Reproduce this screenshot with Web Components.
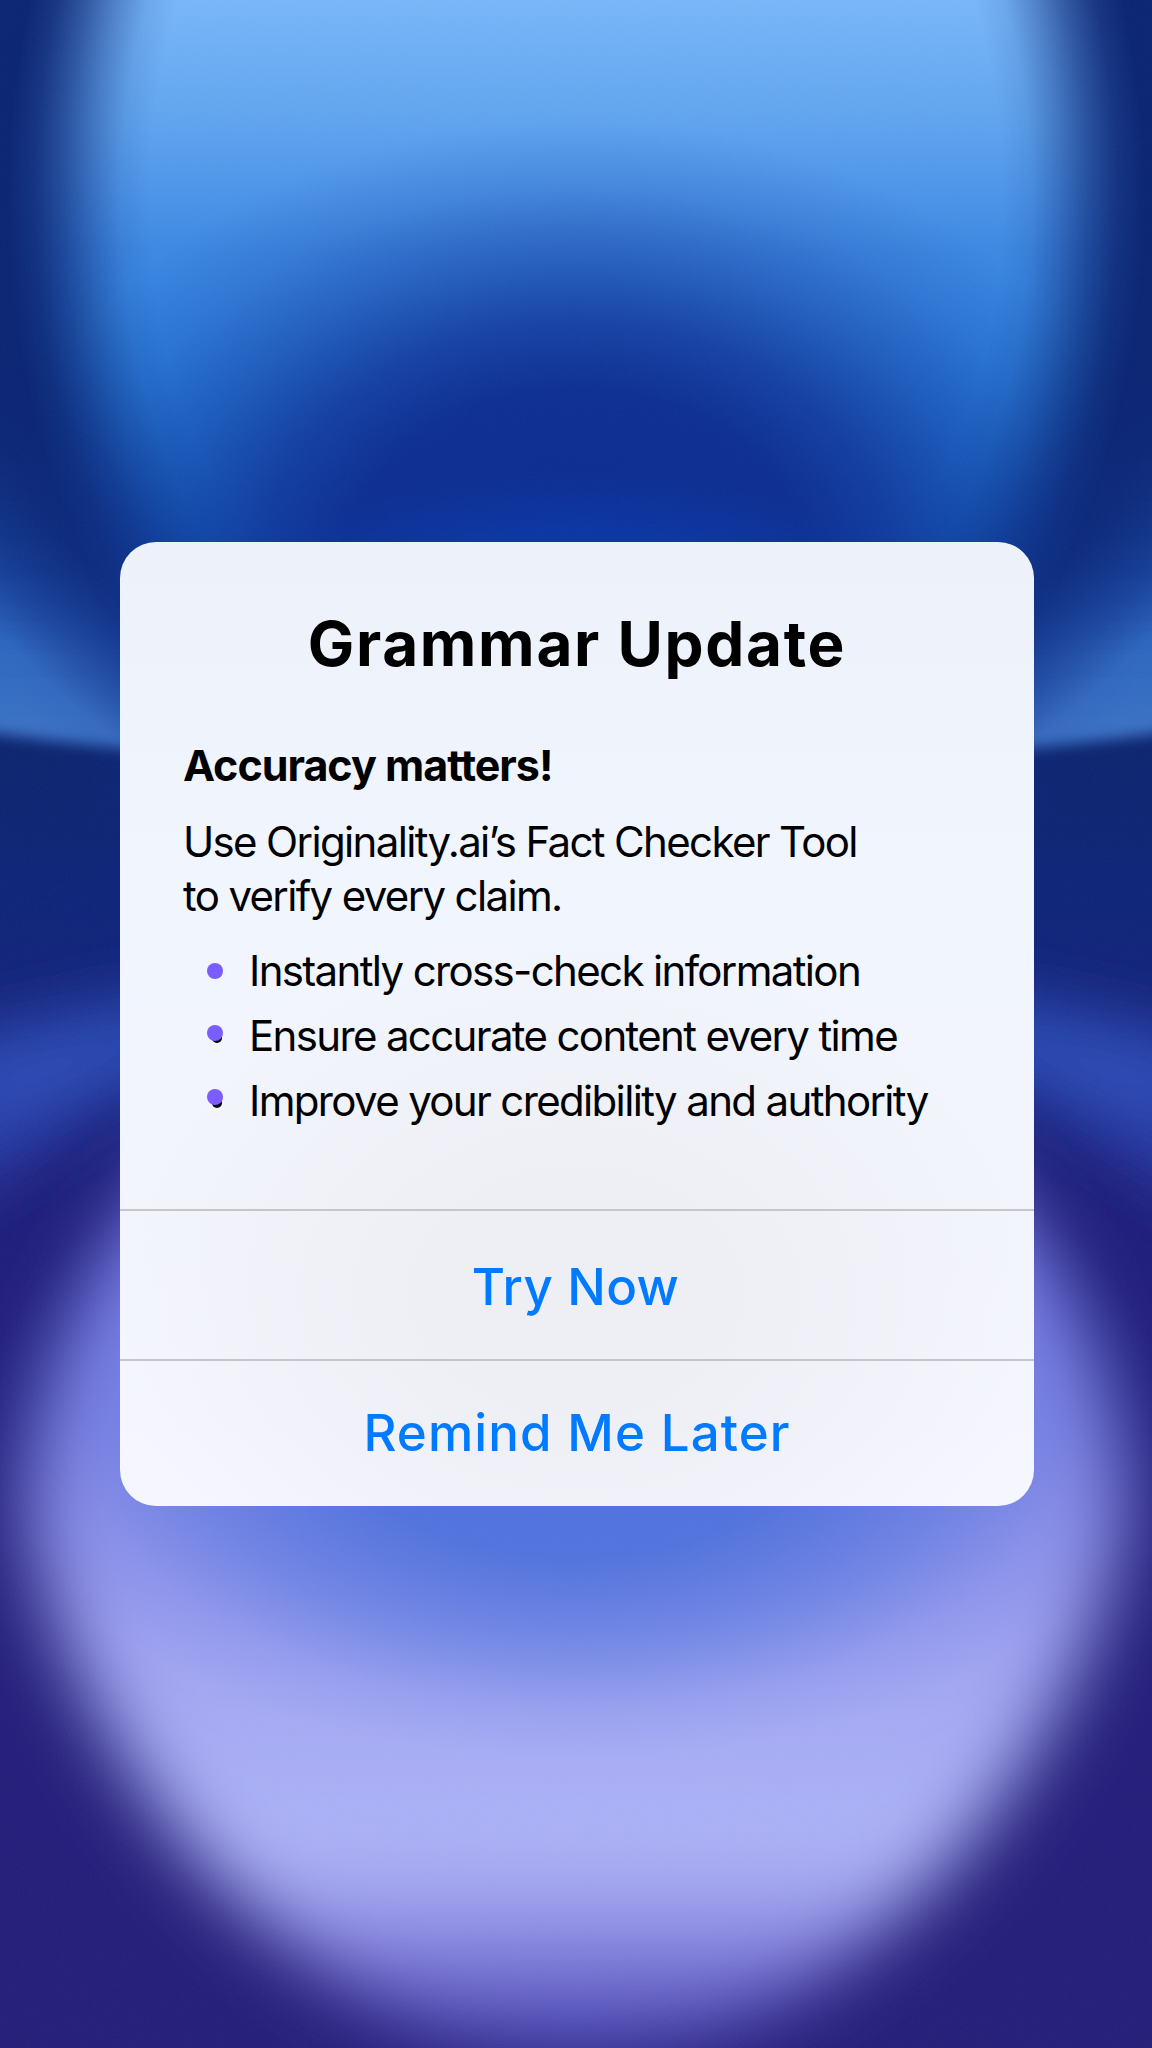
<!DOCTYPE html>
<html lang="en"><head><meta charset="utf-8"><title>Grammar Update</title>
<style>html,body{margin:0;padding:0;background:#0d2468}</style></head>
<body>
<update-screen>
  <alert-card>
    <span slot="title">Grammar Update</span>
    <alert-body slot="body">
      <span slot="lead">Accuracy matters!</span>
      <span slot="text">Use Originality.ai’s Fact Checker Tool<br>to verify every claim.</span>
      <bullet-item>Instantly cross-check information</bullet-item>
      <bullet-item style="--shift:-3px">Ensure accurate content every time</bullet-item>
      <bullet-item style="--shift:-4px">Improve your credibility and authority</bullet-item>
    </alert-body>
    <alert-action slot="actions" style="--h:150px;--pt:4px;--ls:.4px;--pr:3px">Try Now</alert-action>
    <alert-action slot="actions" style="--h:147px;--pb:2px;--ls:1.1px">Remind Me Later</alert-action>
  </alert-card>
</update-screen>
<script>
const def=(name,html)=>customElements.define(name,class extends HTMLElement{
  constructor(){super();this.attachShadow({mode:'open'}).innerHTML=html;}
});
def('update-screen',`<style>
:host{display:grid;width:1152px;height:2048px;overflow:hidden;font-family:Inter,"Liberation Sans",sans-serif;color:#000}
svg{grid-area:1/1;width:1152px;height:2048px;display:block}
.fg{grid-area:1/1;display:flex;align-items:center;justify-content:center;padding-left:2px;z-index:1}
</style>
<svg viewBox="0 0 1152 2048" preserveAspectRatio="none" aria-hidden="true">
<defs>
<linearGradient id="base" x1="0" y1="0" x2="0" y2="1">
  <stop offset="0" stop-color="#0a2a84"/><stop offset=".2" stop-color="#0c2a80"/><stop offset=".37" stop-color="#0e2670"/><stop offset=".44" stop-color="#10267a"/><stop offset=".6" stop-color="#211f7c"/><stop offset="1" stop-color="#26207a"/>
</linearGradient>
<linearGradient id="ring" gradientUnits="userSpaceOnUse" x1="0" y1="0" x2="0" y2="760">
  <stop offset="0" stop-color="#78b6f8"/><stop offset=".16" stop-color="#60a4ee"/><stop offset=".33" stop-color="#3d88e2"/><stop offset=".5" stop-color="#2a7cd8"/><stop offset=".7" stop-color="#196ac8"/><stop offset="1" stop-color="#0b4cac"/>
</linearGradient>
<linearGradient id="wing" gradientUnits="userSpaceOnUse" x1="0" y1="400" x2="0" y2="750">
  <stop offset="0" stop-color="#0c2a80"/><stop offset=".46" stop-color="#1b4aa6"/><stop offset=".72" stop-color="#2f68c0"/><stop offset="1" stop-color="#3f74c4"/>
</linearGradient>
<linearGradient id="lav" gradientUnits="userSpaceOnUse" x1="0" y1="1100" x2="0" y2="2060">
  <stop offset="0" stop-color="#7a7de8"/><stop offset=".36" stop-color="#8789e6"/><stop offset=".61" stop-color="#a3a7f2"/><stop offset=".79" stop-color="#aeb4f6"/><stop offset=".87" stop-color="#8c8ae2"/><stop offset=".94" stop-color="#605dc6"/><stop offset="1" stop-color="#3a36a0"/>
</linearGradient>
<linearGradient id="band" gradientUnits="userSpaceOnUse" x1="0" y1="960" x2="0" y2="1200">
  <stop offset="0" stop-color="#1c3a9c"/><stop offset=".35" stop-color="#2f52bc"/><stop offset="1" stop-color="#27359f"/>
</linearGradient>
<radialGradient id="haloG" gradientUnits="userSpaceOnUse" cx="0" cy="0" r="1" gradientTransform="translate(576 150) scale(760 740)">
  <stop offset="0" stop-color="#0c2674"/><stop offset=".75" stop-color="#0c2674"/><stop offset=".85" stop-color="#0c2674" stop-opacity=".85"/><stop offset=".95" stop-color="#0c2674" stop-opacity=".3"/><stop offset="1" stop-color="#0c2674" stop-opacity="0"/>
</radialGradient>
<radialGradient id="ringMaskG" gradientUnits="userSpaceOnUse" cx="0" cy="0" r="1" gradientTransform="translate(576 200) scale(570 725)">
  <stop offset="0" stop-color="#fff"/><stop offset=".75" stop-color="#fff"/><stop offset=".8" stop-color="#fff" stop-opacity=".9"/><stop offset=".85" stop-color="#fff" stop-opacity=".65"/><stop offset=".9" stop-color="#fff" stop-opacity=".36"/><stop offset=".95" stop-color="#fff" stop-opacity=".12"/><stop offset="1" stop-color="#fff" stop-opacity="0"/>
</radialGradient>
<mask id="ringMask" maskUnits="userSpaceOnUse" x="0" y="0" width="1152" height="1000"><rect width="1152" height="1000" fill="url(#ringMaskG)"/></mask>
<radialGradient id="innerG" gradientUnits="userSpaceOnUse" cx="0" cy="0" r="1" gradientTransform="translate(576 570) scale(580 450)">
  <stop offset="0" stop-color="#0e2c90"/><stop offset=".4" stop-color="#0e2c90" stop-opacity=".95"/><stop offset=".55" stop-color="#0e2c90" stop-opacity=".72"/><stop offset=".7" stop-color="#0e2c90" stop-opacity=".4"/><stop offset=".85" stop-color="#0e2c90" stop-opacity=".14"/><stop offset="1" stop-color="#0e2c90" stop-opacity="0"/>
</radialGradient>
<radialGradient id="glowG" gradientUnits="userSpaceOnUse" cx="0" cy="0" r="1" gradientTransform="translate(576 620) scale(340 150)">
  <stop offset="0" stop-color="#0a3eb0"/><stop offset=".5" stop-color="#0a3eb0" stop-opacity=".7"/><stop offset="1" stop-color="#0a3eb0" stop-opacity="0"/>
</radialGradient>
<radialGradient id="coreG" gradientUnits="userSpaceOnUse" cx="0" cy="0" r="1" gradientTransform="translate(576 1420) scale(590 340)">
  <stop offset="0" stop-color="#4f72dc"/><stop offset=".4" stop-color="#4f72dc" stop-opacity=".95"/><stop offset=".67" stop-color="#4f72dc" stop-opacity=".5"/><stop offset=".85" stop-color="#4f72dc" stop-opacity=".14"/><stop offset="1" stop-color="#4f72dc" stop-opacity="0"/>
</radialGradient>
<filter id="b8" x="-20%" y="-20%" width="140%" height="140%"><feGaussianBlur stdDeviation="7"/></filter>
<filter id="bBand" x="-30%" y="-60%" width="160%" height="220%"><feGaussianBlur stdDeviation="32"/></filter>
<filter id="bLav" x="-30%" y="-30%" width="160%" height="160%"><feGaussianBlur stdDeviation="38"/></filter>
<filter id="grain" x="0" y="0" width="100%" height="100%"><feTurbulence type="fractalNoise" baseFrequency=".9" numOctaves="2" seed="4"/><feColorMatrix values="0 0 0 0 1  0 0 0 0 1  0 0 0 0 1  .9 0 0 0 -.3"/></filter>
</defs>
<rect width="1152" height="2048" fill="url(#base)"/>
<ellipse cx="576" cy="300" rx="1500" ry="470" fill="url(#wing)" filter="url(#b8)"/>
<rect width="1152" height="1000" fill="url(#haloG)"/>
<rect width="1152" height="1000" fill="url(#ring)" mask="url(#ringMask)"/>
<rect width="1152" height="1000" fill="url(#innerG)"/>
<rect y="450" width="1152" height="340" fill="url(#glowG)"/>
<path d="M-70 1050 L130 1000 L1022 1000 L1222 1050 L1222 1220 L1022 1080 L130 1080 L-70 1220 Z" fill="url(#band)" filter="url(#bBand)"/>
<path d="M576 1010 C430 1010 370 1010 300 1050 C130 1160 40 1360 28 1500 C40 1700 280 2060 576 2060 C872 2060 1112 1700 1124 1500 C1112 1360 1022 1160 852 1050 C782 1010 722 1010 576 1010 Z" fill="url(#lav)" filter="url(#bLav)"/>
<rect y="1000" width="1152" height="800" fill="url(#coreG)"/>
<rect width="1152" height="2048" filter="url(#grain)" opacity=".05"/>
</svg>
<div class="fg"><slot></slot></div>`);
def('alert-card',`<style>
:host{display:flex;flex-direction:column;width:914px;height:964px;border-radius:36px;overflow:hidden;
background:radial-gradient(ellipse 470px 360px at 50% 78%,#eeeff5 0,#eeeff5 30%,rgba(238,239,245,0) 100%),linear-gradient(#edf1fa 0,#f1f5fe 35%,#f3f5fc 70%,#f5f6fe 100%)}
h1{margin:66px 0 0;font:700 62px/72px Inter,sans-serif;text-align:center;letter-spacing:1.7px}
.body{flex:1}
.acts{display:flex;flex-direction:column}
</style>
<h1><slot name="title"></slot></h1>
<div class="body"><slot name="body"></slot></div>
<div class="acts"><slot name="actions"></slot></div>`);
def('alert-body',`<style>
:host{display:block;padding:58px 63px 0}
.lead{font:700 43px/54px Inter,sans-serif;letter-spacing:-1px}
.text{margin-top:23px;font:400 42px/54px Inter,sans-serif;letter-spacing:-1.65px}
.list{margin-top:15px;display:flex;flex-direction:column}
</style>
<div class="lead"><slot name="lead"></slot></div>
<div class="text"><slot name="text"></slot></div>
<div class="list"><slot></slot></div>`);
def('bullet-item',`<style>
:host{display:flex;align-items:center;height:65px;font:400 42px/54px Inter,sans-serif;letter-spacing:-1.65px;white-space:nowrap}
.m{position:relative;width:66px;height:65px;flex:none}
.k,.p{position:absolute;border-radius:50%}
.k{left:29px;top:30px;width:10px;height:10px;background:#000}
.p{left:24px;top:calc(25px + var(--shift,0px));width:16px;height:16px;background:#7b5cff}
</style>
<span class="m"><i class="k"></i><i class="p"></i></span><span><slot></slot></span>`);
def('alert-action',`<style>
:host{display:flex;align-items:center;justify-content:center;height:calc(var(--h) - 2px - var(--pt,0px) - var(--pb,0px));padding:var(--pt,0px) var(--pr,0px) var(--pb,0px) 0;border-top:2px solid #c6c6ca;font:500 51px/60px Inter,sans-serif;color:#007aff;letter-spacing:var(--ls,.5px)}
</style><slot></slot>`);
</script>
</body></html>
